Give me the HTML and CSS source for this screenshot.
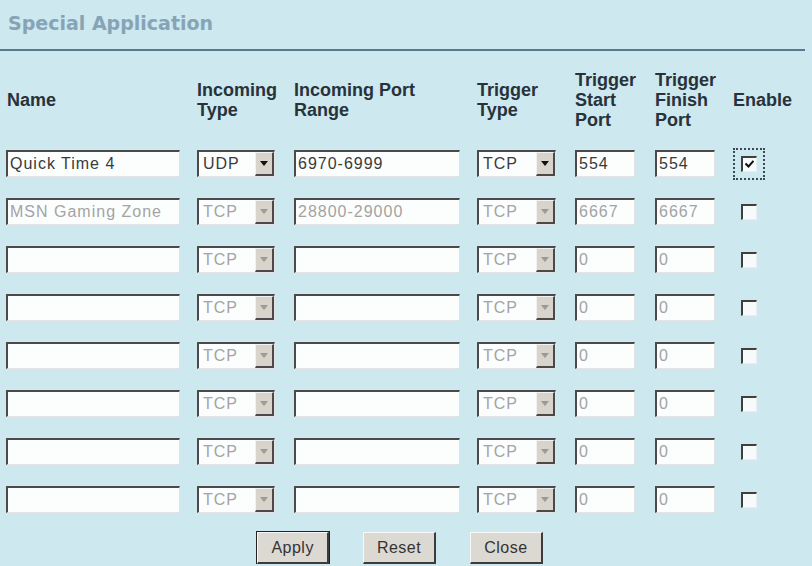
FILE: index.html
```html
<!DOCTYPE html>
<html lang="en">
<head>
    <meta charset="UTF-8">
    <title>Special Application</title>
    <link rel="stylesheet" href="styles.css">
</head>
<body>
    <div class="title">Special Application</div>

    <div class="grid">
        <div class="th th-name">Name</div>
        <div class="th">Incoming<br>Type</div>
        <div class="th">Incoming Port<br>Range</div>
        <div class="th">Trigger<br>Type</div>
        <div class="th">Trigger<br>Start<br>Port</div>
        <div class="th">Trigger<br>Finish<br>Port</div>
        <div class="th">Enable</div>

        <!-- row 1 -->
        <input class="field f-name" type="text" value="Quick Time 4">
        <span class="select s-in"><span class="val">UDP</span><span class="arrow"><svg width="8" height="5" viewBox="0 0 8 5"><path d="M0 0H8L4 5Z"/></svg></span></span>
        <input class="field f-range" type="text" value="6970-6999">
        <span class="select s-tr"><span class="val">TCP</span><span class="arrow"><svg width="8" height="5" viewBox="0 0 8 5"><path d="M0 0H8L4 5Z"/></svg></span></span>
        <input class="field f-port" type="text" value="554">
        <input class="field f-port" type="text" value="554">
        <span class="cell-check"><span class="check checked"><svg width="9" height="8" viewBox="0 0 9 8"><path d="M0.5 3.5L3.5 6.5L8.5 0.8" fill="none" stroke="#111" stroke-width="2"/></svg></span></span>

        <!-- row 2 -->
        <input class="field f-name off" type="text" value="MSN Gaming Zone">
        <span class="select s-in off"><span class="val">TCP</span><span class="arrow"><svg width="8" height="5" viewBox="0 0 8 5"><path d="M0 0H8L4 5Z"/></svg></span></span>
        <input class="field f-range off" type="text" value="28800-29000">
        <span class="select s-tr off"><span class="val">TCP</span><span class="arrow"><svg width="8" height="5" viewBox="0 0 8 5"><path d="M0 0H8L4 5Z"/></svg></span></span>
        <input class="field f-port off" type="text" value="6667">
        <input class="field f-port off" type="text" value="6667">
        <span class="cell-check"><span class="check"></span></span>

        <!-- row 3 -->
        <input class="field f-name off" type="text" value="">
        <span class="select s-in off"><span class="val">TCP</span><span class="arrow"><svg width="8" height="5" viewBox="0 0 8 5"><path d="M0 0H8L4 5Z"/></svg></span></span>
        <input class="field f-range off" type="text" value="">
        <span class="select s-tr off"><span class="val">TCP</span><span class="arrow"><svg width="8" height="5" viewBox="0 0 8 5"><path d="M0 0H8L4 5Z"/></svg></span></span>
        <input class="field f-port off" type="text" value="0">
        <input class="field f-port off" type="text" value="0">
        <span class="cell-check"><span class="check"></span></span>

        <!-- row 4 -->
        <input class="field f-name off" type="text" value="">
        <span class="select s-in off"><span class="val">TCP</span><span class="arrow"><svg width="8" height="5" viewBox="0 0 8 5"><path d="M0 0H8L4 5Z"/></svg></span></span>
        <input class="field f-range off" type="text" value="">
        <span class="select s-tr off"><span class="val">TCP</span><span class="arrow"><svg width="8" height="5" viewBox="0 0 8 5"><path d="M0 0H8L4 5Z"/></svg></span></span>
        <input class="field f-port off" type="text" value="0">
        <input class="field f-port off" type="text" value="0">
        <span class="cell-check"><span class="check"></span></span>

        <!-- row 5 -->
        <input class="field f-name off" type="text" value="">
        <span class="select s-in off"><span class="val">TCP</span><span class="arrow"><svg width="8" height="5" viewBox="0 0 8 5"><path d="M0 0H8L4 5Z"/></svg></span></span>
        <input class="field f-range off" type="text" value="">
        <span class="select s-tr off"><span class="val">TCP</span><span class="arrow"><svg width="8" height="5" viewBox="0 0 8 5"><path d="M0 0H8L4 5Z"/></svg></span></span>
        <input class="field f-port off" type="text" value="0">
        <input class="field f-port off" type="text" value="0">
        <span class="cell-check"><span class="check"></span></span>

        <!-- row 6 -->
        <input class="field f-name off" type="text" value="">
        <span class="select s-in off"><span class="val">TCP</span><span class="arrow"><svg width="8" height="5" viewBox="0 0 8 5"><path d="M0 0H8L4 5Z"/></svg></span></span>
        <input class="field f-range off" type="text" value="">
        <span class="select s-tr off"><span class="val">TCP</span><span class="arrow"><svg width="8" height="5" viewBox="0 0 8 5"><path d="M0 0H8L4 5Z"/></svg></span></span>
        <input class="field f-port off" type="text" value="0">
        <input class="field f-port off" type="text" value="0">
        <span class="cell-check"><span class="check"></span></span>

        <!-- row 7 -->
        <input class="field f-name off" type="text" value="">
        <span class="select s-in off"><span class="val">TCP</span><span class="arrow"><svg width="8" height="5" viewBox="0 0 8 5"><path d="M0 0H8L4 5Z"/></svg></span></span>
        <input class="field f-range off" type="text" value="">
        <span class="select s-tr off"><span class="val">TCP</span><span class="arrow"><svg width="8" height="5" viewBox="0 0 8 5"><path d="M0 0H8L4 5Z"/></svg></span></span>
        <input class="field f-port off" type="text" value="0">
        <input class="field f-port off" type="text" value="0">
        <span class="cell-check"><span class="check"></span></span>

        <!-- row 8 -->
        <input class="field f-name off" type="text" value="">
        <span class="select s-in off"><span class="val">TCP</span><span class="arrow"><svg width="8" height="5" viewBox="0 0 8 5"><path d="M0 0H8L4 5Z"/></svg></span></span>
        <input class="field f-range off" type="text" value="">
        <span class="select s-tr off"><span class="val">TCP</span><span class="arrow"><svg width="8" height="5" viewBox="0 0 8 5"><path d="M0 0H8L4 5Z"/></svg></span></span>
        <input class="field f-port off" type="text" value="0">
        <input class="field f-port off" type="text" value="0">
        <span class="cell-check"><span class="check"></span></span>
    </div>

    <div class="buttons">
        <button class="button default">Apply</button>
        <button class="button">Reset</button>
        <button class="button">Close</button>
    </div>
</body>
</html>
```

FILE: styles.css
```css
body {
    margin: 0;
    background: #cde8ee;
    font-family: "Liberation Sans", Arial, sans-serif;
    color: #333;
    overflow: hidden;
}
.title {
    margin-right: 7px;
    padding: 12px 8px 15px;
    line-height: 22px;
    font-family: "DejaVu Sans", Verdana, sans-serif;
    font-weight: bold;
    font-size: 19px;
    color: #86a4b6;
    border-bottom: 2px solid #557a8f;
}
.grid {
    display: grid;
    grid-template-columns: 191px 97px 183px 98px 80px 78px 1fr;
    grid-template-rows: 58px;
    grid-auto-rows: 27px;
    row-gap: 21px;
    align-items: center;
    margin-top: 20px;
    padding-left: 6px;
}
.th {
    font-family: "Liberation Sans", Arial, sans-serif;
    font-weight: bold;
    font-size: 18px;
    line-height: 20px;
    color: #27323b;
}
.th-name {
    padding-left: 1px;
}
.field {
    box-sizing: border-box;
    height: 27px;
    margin: 0;
    padding: 0 0 0 2px;
    border-style: solid;
    border-width: 2px 1px 1px 2px;
    border-color: #4a4a4a #e4e4e4 #e4e4e4 #4a4a4a;
    background: #fcfefe;
    font-family: "Liberation Sans", Arial, sans-serif;
    font-size: 16px;
    letter-spacing: 1px;
    color: #3a3a3a;
    outline: none;
}
.field.off {
    color: #a3a3a3;
}
.f-name {
    width: 174px;
}
.f-range {
    width: 166px;
}
.f-port {
    width: 60px;
}
.select {
    box-sizing: border-box;
    display: flex;
    height: 27px;
    border-style: solid;
    border-width: 2px 1px 1px 2px;
    border-color: #4a4a4a #e4e4e4 #e4e4e4 #4a4a4a;
    background: #fcfefe;
    font-size: 16px;
    letter-spacing: 1px;
    color: #3a3a3a;
}
.s-in {
    width: 78px;
}
.s-tr {
    width: 79px;
}
.select .val {
    flex: 1;
    padding-left: 4px;
    line-height: 24px;
}
.select .arrow {
    box-sizing: border-box;
    width: 19px;
    display: flex;
    align-items: center;
    justify-content: center;
    background: #d8d4cc;
    border-style: solid;
    border-width: 1px 2px 2px 1px;
    border-color: #f2f2f2 #4a4a4a #4a4a4a #f2f2f2;
}
.select .arrow svg {
    fill: #111;
}
.select.off {
    color: #a3a3a3;
}
.select.off .arrow svg {
    fill: #9a9a9a;
}
.cell-check {
    display: flex;
    align-items: center;
    padding-left: 8px;
}
.check {
    box-sizing: border-box;
    display: flex;
    align-items: center;
    justify-content: center;
    width: 16px;
    height: 16px;
    border-style: solid;
    border-width: 2px 1px 1px 2px;
    border-color: #3f3f3f #e8eef0 #e8eef0 #3f3f3f;
    background: #f6fafa;
}
.check.checked {
    outline: 2px dotted #3a4a55;
    outline-offset: 6px;
}
.buttons {
    display: flex;
    justify-content: center;
    gap: 34px;
    margin-top: 19px;
    padding-right: 12px;
}
.button {
    box-sizing: border-box;
    height: 32px;
    padding: 0 13px;
    background: #dcd8d2;
    border-style: solid;
    border-width: 1px 2px 2px 1px;
    border-color: #f8f8f8 #3c3c3c #3c3c3c #f8f8f8;
    font-family: "Liberation Sans", Arial, sans-serif;
    font-size: 16px;
    letter-spacing: 0.5px;
    color: #333;
}
.button.default {
    outline: 1px solid #222;
}
```
